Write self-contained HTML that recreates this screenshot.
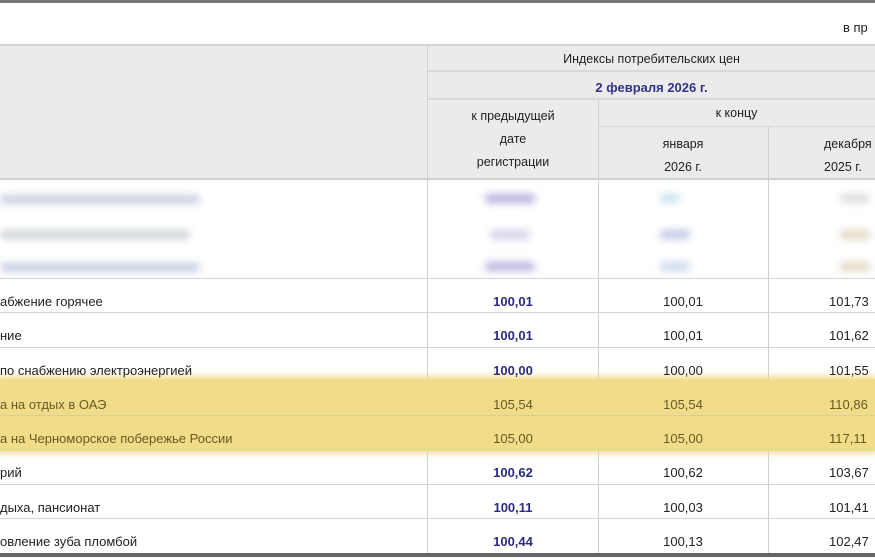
<!DOCTYPE html>
<html><head><meta charset="utf-8"><style>
body{margin:0;width:875px;height:560px;background:#fff;overflow:hidden;position:relative;font-family:"Liberation Sans",sans-serif;font-size:13px;color:#222}
.a{position:absolute}
.t{position:absolute;text-align:center;white-space:nowrap}
.hl{position:absolute;left:0;width:875px;background:#f1dc8a;box-shadow:0 0 6px 3px rgba(240,215,120,.8)}
.blur{position:absolute;filter:blur(4px);height:9px;border-radius:4px}
</style></head><body>
<div class="a" style="left:0;top:0;width:875px;height:3px;background:#777"></div>
<div class="t" style="left:843px;top:20px;width:60px;text-align:left">в пр</div>
<div class="a" style="left:0;top:44px;width:875px;height:132px;background:#ebebeb;border-top:2px solid #d4d4d4;border-bottom:2px solid #cfcfcf"></div>
<div class="a" style="left:428px;top:70px;width:447px;height:2px;background:#d8d8d8"></div>
<div class="a" style="left:428px;top:98px;width:447px;height:2px;background:#d8d8d8"></div>
<div class="a" style="left:598px;top:126px;width:277px;height:1px;background:#d8d8d8"></div>
<div class="a" style="left:427px;top:44px;width:1px;height:510px;background:#d0d0d0"></div>
<div class="a" style="left:598px;top:100px;width:1px;height:454px;background:#d0d0d0"></div>
<div class="a" style="left:768px;top:127px;width:1px;height:427px;background:#d0d0d0"></div>
<div class="t" style="left:428px;top:52px;width:447px;font-size:12.5px">Индексы потребительских цен</div>
<div class="t" style="left:428px;top:80px;width:447px;font-weight:bold;color:#33338a">2 февраля 2026 г.</div>
<div class="t" style="left:428px;top:105px;width:170px;line-height:23px;font-size:12.5px">к предыдущей<br>дате<br>регистрации</div>
<div class="t" style="left:598px;top:106px;width:277px;font-size:12.5px">к концу</div>
<div class="t" style="left:598px;top:133px;width:170px;line-height:23px;font-size:12.5px">января<br>2026 г.</div>
<div class="t" style="left:768px;top:133px;width:170px;line-height:23px;font-size:12.5px;text-align:left;padding-left:56px">декабря<br>2025 г.</div>
<div class="blur" style="left:0;top:195px;width:200px;background:#c8d0e0"></div>
<div class="blur" style="left:0;top:230px;width:190px;background:#cfd3d8"></div>
<div class="blur" style="left:0;top:263px;width:200px;background:#c5cfe2"></div>
<div class="blur" style="left:485px;top:194px;width:50px;background:#b5b0dd"></div>
<div class="blur" style="left:490px;top:230px;width:40px;background:#d2cfe8"></div>
<div class="blur" style="left:485px;top:262px;width:50px;background:#b8b4dd"></div>
<div class="blur" style="left:660px;top:194px;width:20px;background:#c9e2f0"></div>
<div class="blur" style="left:660px;top:230px;width:30px;background:#bfc8e6"></div>
<div class="blur" style="left:660px;top:262px;width:30px;background:#c9d8ec"></div>
<div class="blur" style="left:840px;top:194px;width:30px;background:#ddd"></div>
<div class="blur" style="left:840px;top:230px;width:30px;background:#e3d6c0"></div>
<div class="blur" style="left:840px;top:262px;width:30px;background:#e3d6c0"></div>
<div class="hl" style="top:379px;height:72px"></div>
<div class="a" style="left:0;top:415px;width:875px;height:1px;background:#d8cfa0"></div>
<div id="rows"></div>
<div class="a" style="left:0;top:553px;width:875px;height:4px;background:#666"></div>
<script>
const r=[["абжение горячее","100,01","100,01","101,73",0],["ние","100,01","100,01","101,62",0],["по снабжению электроэнергией","100,00","100,00","101,55",0],["а на отдых в ОАЭ","105,54","105,54","110,86",1],["а на Черноморское побережье России","105,00","105,00","117,11",1],["рий","100,62","100,62","103,67",0],["дыха, пансионат","100,11","100,03","101,41",0],["овление зуба пломбой","100,44","100,13","102,47",0]];
let h="";const tops=[278,312,347,381,415,449,484,518];
r.forEach((x,i)=>{const y=tops[i];const c=x[4]?"#6b5a20":"#222";
h+=`<div class="a" style="left:0;top:${y}px;width:875px;height:1px;background:${x[4]?'transparent':'#d4d4d4'}"></div>`;
h+=`<div class="t" style="left:0;top:${y+16}px;text-align:left;color:${c}">${x[0]}</div>`;
h+=`<div class="t" style="left:428px;top:${y+16}px;width:170px;font-weight:${x[4]?'normal':'bold'};color:${x[4]?c:'#2b2b80'}">${x[1]}</div>`;
h+=`<div class="t" style="left:598px;top:${y+16}px;width:170px;color:${c}">${x[2]}</div>`;
h+=`<div class="t" style="left:829px;top:${y+16}px;text-align:left;color:${c}">${x[3]}</div>`;});
document.getElementById("rows").innerHTML=h;
</script>
</body></html>
